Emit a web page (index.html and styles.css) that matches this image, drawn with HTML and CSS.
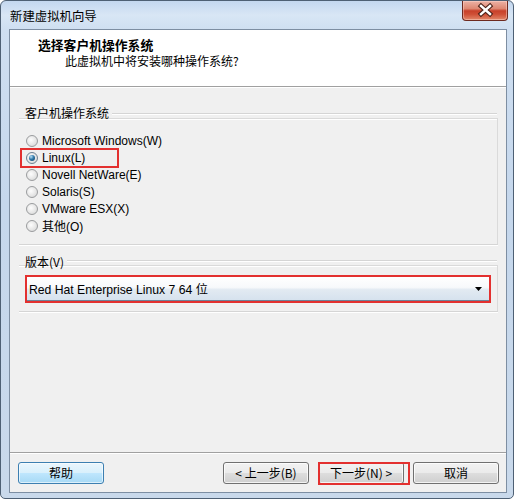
FILE: index.html
```html
<!DOCTYPE html>
<html lang="zh-CN">
<head>
<meta charset="utf-8">
<title>新建虚拟机向导</title>
<link rel="stylesheet" href="styles.css">
</head>
<body>
<div class="window">
  <div class="titlebar">
    <span class="title">新建虚拟机向导</span>
    <div class="close">
      <svg width="44" height="19" viewBox="0 0 44 19">
        <path d="M18 5 L27 13 M27 5 L18 13" stroke="#4b2118" stroke-width="4.6" stroke-linecap="square" fill="none"/>
        <path d="M18 5 L27 13 M27 5 L18 13" stroke="#ffffff" stroke-width="2.4" stroke-linecap="square" fill="none"/>
      </svg>
    </div>
  </div>
  <div class="client">
    <div class="header">
      <div class="h-title">选择客户机操作系统</div>
      <div class="h-sub">此虚拟机中将安装哪种操作系统?</div>
    </div>
    <div class="body">
      <div class="group">
        <div class="legend"><span class="legend-text">客户机操作系统</span><i class="rule"></i></div>
        <div class="gbody radios">
          <div class="radio"><span class="circle"></span>Microsoft Windows(W)</div>
          <div class="radio mark"><span class="circle on"></span>Linux(L)<span class="hl-linux"></span></div>
          <div class="radio"><span class="circle"></span>Novell NetWare(E)</div>
          <div class="radio"><span class="circle"></span>Solaris(S)</div>
          <div class="radio"><span class="circle"></span>VMware ESX(X)</div>
          <div class="radio"><span class="circle"></span>其他(O)</div>
        </div>
      </div>
      <div class="group g2">
        <div class="legend"><span class="legend-text low">版本(V)</span><i class="rule"></i></div>
        <div class="gbody combo-wrap">
          <div class="combo-hl">
            <div class="combo">
              <span class="combo-text">Red Hat Enterprise Linux 7 64 位</span>
              <svg class="arrow" width="7" height="4" viewBox="0 0 7 4"><path d="M0 0 H7 L3.5 4 Z" fill="#000"/></svg>
            </div>
          </div>
        </div>
      </div>
    </div>
    <div class="footer">
      <button class="btn default">帮助</button>
      <span class="spacer"></span>
      <button class="btn">&lt; 上一步(B)</button>
      <span class="btn-mark"><button class="btn">下一步(N) &gt;</button><span class="hl-next"></span></span>
      <button class="btn">取消</button>
    </div>
  </div>
</div>
</body>
</html>
```

FILE: styles.css
```css
html, body {
  margin: 0;
  padding: 0;
  background: #ffffff;
}

body {
  font-family: "Liberation Sans", "Noto Sans CJK SC", sans-serif;
  font-size: 12px;
  color: #000;
}

.window {
  box-sizing: border-box;
  width: 514px;
  height: 499px;
  border: 1px solid #4e6074;
  border-radius: 6px 6px 5px 5px;
  background: linear-gradient(180deg, #c3d7ef 0px, #d8e6f5 14px, #cfdff1 28px, #c5d7ec 200px, #c9d9eb 100%);
  display: flex;
  flex-direction: column;
}

.titlebar {
  height: 28px;
  display: flex;
  align-items: flex-start;
  padding-right: 5px;
}

.title {
  margin: 8px 0 0 9px;
  line-height: 14px;
  font-size: 12.4px;
  font-family: "Noto Sans CJK SC", sans-serif;
  color: #000;
  flex: 1;
}

.close {
  width: 44px;
  height: 19px;
  border: 1px solid #6d2a20;
  border-top: none;
  border-radius: 0 0 4px 4px;
  background: linear-gradient(180deg, #ecb2a5 0%, #de8873 40%, #c8402a 52%, #cf4f36 70%, #e2886a 100%);
  box-shadow: inset 0 0 0 1px rgba(255, 220, 210, 0.45);
}

.close svg {
  display: block;
}

.client {
  flex: 1;
  margin: 0 6px 5px 8px;
  border: 1px solid #7d8ea2;
  background: #f0f0f0;
  display: flex;
  flex-direction: column;
}

.header {
  height: 56px;
  background: #ffffff;
  border-bottom: 1px solid #a0a0a0;
  box-shadow: 0 1px 0 #ffffff;
  box-sizing: content-box;
}

.h-title {
  margin: 8px 0 0 28px;
  line-height: 14px;
  font-weight: bold;
  font-size: 12.8px;
  font-family: "Noto Sans CJK SC", sans-serif;
}

.h-sub {
  margin: 2px 0 0 55px;
  line-height: 14px;
  font-family: "Noto Sans CJK SC", sans-serif;
}

.body {
  flex: 1;
  padding-top: 21px;
}

.group {
  margin: 0 8px 0 9px;
}

.g2 {
  margin-top: 10px;
}

.legend {
  height: 10px;
  display: flex;
  align-items: center;
  padding-left: 6px;
  padding-right: 1px;
}

.legend-text {
  line-height: 10px;
  font-family: "Noto Sans CJK SC", sans-serif;
  margin-right: 3px;
}

.legend-text.low {
  margin-top: 4px;
}

.rule {
  flex: 1;
  height: 0;
  border-top: 1px solid #d5d5d5;
  box-shadow: 0 1px 0 #ffffff;
}

.gbody {
  border-top: 1px solid #dadada;
  border-right: 1px solid #dadada;
  border-bottom: 1px solid #d5d5d5;
  box-shadow: 0 1px 0 #ffffff, inset 0 1px 0 #ffffff;
}

.radios {
  padding: 13px 0 10px 7px;
}

.radio {
  height: 17px;
  display: flex;
  align-items: center;
  position: relative;
  font-family: "Liberation Sans", "Noto Sans CJK SC", sans-serif;
}

.circle {
  box-sizing: border-box;
  width: 12px;
  height: 12px;
  border-radius: 50%;
  border: 1px solid #9a9c9e;
  background: radial-gradient(circle at 40% 40%, #fdfdfd 0%, #e6e6e6 55%, #cfd0d1 100%);
  margin-right: 4px;
  display: flex;
  align-items: center;
  justify-content: center;
}

.circle.on {
  border-color: #6f8191;
}

.circle.on::after {
  content: "";
  width: 6px;
  height: 6px;
  border-radius: 50%;
  background: radial-gradient(circle at 35% 30%, #b9e1f7 0%, #2f78a8 45%, #0f3c60 100%);
}

.hl-linux {
  position: absolute;
  left: -6px;
  top: -1px;
  width: 99px;
  height: 20px;
  box-sizing: border-box;
  border: 2px solid #e3302f;
}

.combo-wrap {
  padding: 9px 6px 8px 6px;
}

.combo-hl {
  border: 2px solid #e3302f;
}

.combo {
  box-sizing: border-box;
  height: 24px;
  display: flex;
  align-items: center;
  padding: 0 7px 0 2px;
  border-bottom: 1px solid #6d8399;
  background: linear-gradient(180deg, #ffffff 0%, #f7f9fb 45%, #e2eaf2 55%, #d6e2ee 100%);
}

.combo-text {
  flex: 1;
  white-space: nowrap;
  font-size: 12.2px;
}

.arrow {
  display: block;
}

.footer {
  height: 39px;
  border-top: 1px solid #a0a0a0;
  box-shadow: inset 0 1px 0 #ffffff;
  box-sizing: content-box;
  display: flex;
  align-items: flex-start;
  padding: 0 7px 0 8px;
}

.spacer {
  flex: 1;
}

.btn {
  box-sizing: border-box;
  width: 86px;
  height: 22px;
  margin-top: 9px;
  padding: 0;
  border: 1px solid #707070;
  border-radius: 3px;
  background: linear-gradient(180deg, #f2f2f2 0%, #ebebeb 48%, #dddddd 52%, #cfcfcf 100%);
  box-shadow: inset 0 0 0 1px rgba(255, 255, 255, 0.75);
  font-family: "Noto Sans CJK SC", sans-serif;
  font-size: 12px;
  color: #000;
  line-height: 18px;
}

.btn.default {
  border-color: #3c7fb1;
  background: linear-gradient(180deg, #eaf6fd 0%, #d9f0fc 48%, #bee6fd 52%, #a7d9f5 100%);
  box-shadow: inset 0 0 0 1px rgba(255, 255, 255, 0.6);
}

.btn-mark {
  position: relative;
  margin: 0 9px;
  display: flex;
}

.hl-next {
  position: absolute;
  left: 0;
  top: 9px;
  width: 92px;
  height: 23px;
  box-sizing: border-box;
  border: 2px solid #e3302f;
}
```
